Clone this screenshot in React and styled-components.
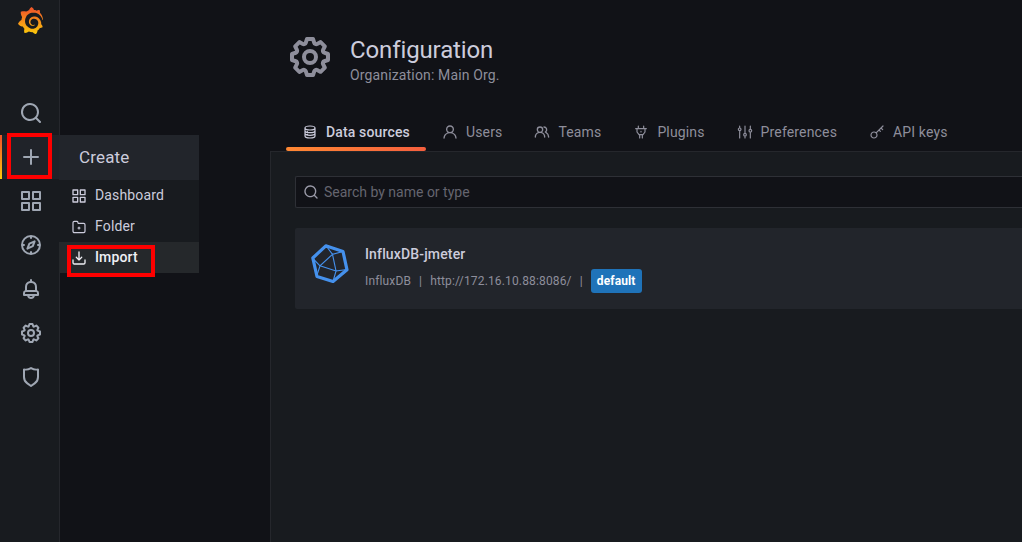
import styled, { createGlobalStyle, css } from "styled-components";
import { SiGrafana } from "react-icons/si";

const GlobalStyle = createGlobalStyle`
  * {
    box-sizing: border-box;
  }

  body {
    margin: 0;
    background: #111217;
    color: #ccccdc;
    font-family: Roboto, "Liberation Sans", sans-serif;
    font-size: 14px;
    letter-spacing: 0.01071em;
    overflow: hidden;
  }
`;

const Page = styled.div`
  display: flex;
  width: 100vw;
  height: 100vh;
  overflow: hidden;
`;

const SideMenu = styled.nav`
  flex: none;
  width: 60px;
  display: flex;
  flex-direction: column;
  background: #181b1f;
  border-right: 1px solid #25272c;
`;

const Logo = styled.div`
  height: 91px;
  padding: 7px 0 0 17px;

  svg {
    display: block;
  }

  svg > path {
    fill: url(#flame);
  }
`;

const SideItem = styled.div`
  position: relative;
  height: 44px;
  padding-left: 2px;
  display: flex;
  align-items: center;
  justify-content: center;
  color: #9fa7b3;

  ${({ $active }) =>
    $active &&
    css`
      background: #202329;

      &::before {
        content: "";
        position: absolute;
        left: 0;
        top: 0;
        width: 2px;
        height: 100%;
        background: linear-gradient(#f05a28 10%, #fbca0a);
      }
    `}
`;

const Flyout = styled.div`
  position: absolute;
  z-index: 1;
  top: 0;
  left: 59px;
  width: 140px;
  background: #181b1f;
  color: #ccccdc;
`;

const FlyoutTitle = styled.div`
  height: 45px;
  padding: 0 0 2px 20px;
  display: flex;
  align-items: center;
  background: #22252b;
  font-size: 17px;
`;

const FlyoutItem = styled.div`
  height: 31px;
  padding-left: 12px;
  display: flex;
  align-items: center;
  gap: 8px;
  line-height: 14px;
  background: ${({ $selected }) => ($selected ? "#25282b" : "transparent")};
  color: ${({ $selected }) => ($selected ? "#f0f0f5" : "#ccccdc")};
  font-weight: ${({ $selected }) => ($selected ? 500 : 400)};

  span {
    padding-bottom: 2px;
  }
`;

const Marker = styled.div`
  position: absolute;
  z-index: 2;
  top: ${({ $top }) => $top}px;
  left: ${({ $left }) => $left}px;
  width: ${({ $width }) => $width}px;
  height: ${({ $height }) => $height}px;
  border: 4px solid #fe0000;
`;

const Main = styled.main`
  flex: 1;
  min-width: 0;
  padding-left: 210px;
  display: flex;
  flex-direction: column;
`;

const Header = styled.header`
  height: 113px;
  padding: 33px 0 0 16px;
  display: flex;
  gap: 16px;
  color: #8e8e9b;
`;

const Title = styled.h1`
  margin: 3px 0 2px;
  color: #ccccdc;
  font-size: 24px;
  font-weight: 400;
  line-height: 28px;
  letter-spacing: -0.12px;
`;

const SubTitle = styled.div`
  line-height: 18px;
`;

const Tabs = styled.div`
  height: 38px;
  padding-left: 16px;
  display: flex;
`;

const Tab = styled.div`
  position: relative;
  padding: 0 16px;
  display: flex;
  align-items: center;
  gap: 8px;
  color: ${({ $active }) => ($active ? "#ccccdc" : "#8e8e9b")};
  font-weight: ${({ $active }) => ($active ? 500 : 400)};

  &::after {
    content: "";
    display: ${({ $active }) => ($active ? "block" : "none")};
    position: absolute;
    left: 0;
    right: 0;
    bottom: 0;
    height: 4px;
    border-radius: 2px;
    background: linear-gradient(90deg, #ff8833, #f55f3e);
  }
`;

const Content = styled.section`
  flex: 1;
  padding: 24px 0 0 24px;
  background: #181b1f;
  border: solid #25272c;
  border-width: 1px 0 0 1px;
`;

const SearchBox = styled.div`
  height: 32px;
  margin-bottom: 20px;
  padding-left: 7px;
  display: flex;
  align-items: center;
  gap: 5px;
  background: #111217;
  border: 1px solid #2e3036;
  border-right: 0;
  border-radius: 2px 0 0 2px;
  color: #9a9aa8;
`;

const Placeholder = styled.span`
  color: #65656f;
  letter-spacing: 0;
`;

const Card = styled.div`
  height: 81px;
  padding: 15px;
  display: flex;
  gap: 15px;
  background: #22252b;
  border-radius: 2px 0 0 2px;
`;

const CardTitle = styled.div`
  margin-bottom: 4px;
  line-height: 22px;
  font-weight: 500;
`;

const CardMeta = styled.div`
  height: 24px;
  display: flex;
  align-items: center;
  color: #8e8e9b;
  font-size: 12px;
  letter-spacing: 0.0125em;
`;

const Separator = styled.span`
  margin: 0 8px;
`;

const Badge = styled.span`
  height: 24px;
  padding: 0 6px;
  display: flex;
  align-items: center;
  border-radius: 3px;
  background: #1f73b9;
  color: #fff;
  font-weight: 700;
  letter-spacing: 0.01em;
`;

const paths = {
  search:
    "M21.71,20.29,18,16.61A9,9,0,1,0,16.61,18l3.68,3.68a1,1,0,0,0,1.42,0A1,1,0,0,0,21.71,20.29ZM11,18a7,7,0,1,1,7-7A7,7,0,0,1,11,18Z",
  plus: "M19,11H13V5a1,1,0,0,0-2,0v6H5a1,1,0,0,0,0,2h6v6a1,1,0,0,0,2,0V13h6a1,1,0,0,0,0-2Z",
  apps: "M10,13H3a1,1,0,0,0-1,1v7a1,1,0,0,0,1,1h7a1,1,0,0,0,1-1V14A1,1,0,0,0,10,13ZM9,20H4V15H9ZM21,2H14a1,1,0,0,0-1,1v7a1,1,0,0,0,1,1h7a1,1,0,0,0,1-1V3A1,1,0,0,0,21,2ZM20,9H15V4h5Zm1,4H14a1,1,0,0,0-1,1v7a1,1,0,0,0,1,1h7a1,1,0,0,0,1-1V14A1,1,0,0,0,21,13Zm-1,7H15V15h5ZM10,2H3A1,1,0,0,0,2,3v7a1,1,0,0,0,1,1h7a1,1,0,0,0,1-1V3A1,1,0,0,0,10,2ZM9,9H4V4H9Z",
  bell: "M18,13.18V10a6,6,0,0,0-5-5.91V3a1,1,0,0,0-2,0V4.09A6,6,0,0,0,6,10v3.18A3,3,0,0,0,4,16v2a1,1,0,0,0,1,1H8.14a4,4,0,0,0,7.72,0H19a1,1,0,0,0,1-1V16A3,3,0,0,0,18,13.18ZM8,10a4,4,0,0,1,8,0v3H8Zm4,10a2,2,0,0,1-1.72-1h3.44A2,2,0,0,1,12,20Zm6-3H6V16a1,1,0,0,1,1-1H17a1,1,0,0,1,1,1Z",
  cog: "M21.32,9.55l-1.89-.63.89-1.78A1,1,0,0,0,20.13,6L18,3.87a1,1,0,0,0-1.15-.19l-1.78.89-.63-1.89A1,1,0,0,0,13.5,2h-3a1,1,0,0,0-.95.68L8.92,4.57,7.14,3.68A1,1,0,0,0,6,3.87L3.87,6a1,1,0,0,0-.19,1.15l.89,1.78-1.89.63A1,1,0,0,0,2,10.5v3a1,1,0,0,0,.68.95l1.89.63-.89,1.78A1,1,0,0,0,3.87,18L6,20.13a1,1,0,0,0,1.15.19l1.78-.89.63,1.89a1,1,0,0,0,.95.68h3a1,1,0,0,0,.95-.68l.63-1.89,1.78.89A1,1,0,0,0,18,20.13L20.13,18a1,1,0,0,0,.19-1.15l-.89-1.78,1.89-.63A1,1,0,0,0,22,13.5v-3A1,1,0,0,0,21.32,9.55ZM20,12.78l-1.2.4A2,2,0,0,0,17.64,16l.57,1.14-1.1,1.1L16,17.64a2,2,0,0,0-2.79,1.16l-.4,1.2H11.22l-.4-1.2A2,2,0,0,0,8,17.64l-1.14.57-1.1-1.1L6.36,16A2,2,0,0,0,5.2,13.18L4,12.78V11.22l1.2-.4A2,2,0,0,0,6.36,8L5.79,6.89l1.1-1.1L8,6.36A2,2,0,0,0,10.82,5.2l.4-1.2h1.56l.4,1.2A2,2,0,0,0,16,6.36l1.14-.57,1.1,1.1L17.64,8a2,2,0,0,0,1.16,2.79l1.2.4ZM12,8a4,4,0,1,0,4,4A4,4,0,0,0,12,8Zm0,6a2,2,0,1,1,2-2A2,2,0,0,1,12,14Z",
  shield:
    "M19.63,3.65a1,1,0,0,0-.84-.2,8,8,0,0,1-6.22-1.27,1,1,0,0,0-1.14,0A8,8,0,0,1,5.21,3.45a1,1,0,0,0-.84.2A1,1,0,0,0,4,4.43v7.45a9,9,0,0,0,3.77,7.33l3.65,2.6a1,1,0,0,0,1.16,0l3.65-2.6A9,9,0,0,0,20,11.88V4.43A1,1,0,0,0,19.63,3.65ZM18,11.88a7,7,0,0,1-2.93,5.7L12,19.77,8.93,17.58A7,7,0,0,1,6,11.88V5.58a10,10,0,0,0,6-1.39,10,10,0,0,0,6,1.39Z",
  import:
    "M21,14a1,1,0,0,0-1,1v4a1,1,0,0,1-1,1H5a1,1,0,0,1-1-1V15a1,1,0,0,0-2,0v4a3,3,0,0,0,3,3H19a3,3,0,0,0,3-3V15A1,1,0,0,0,21,14Zm-9.71,1.71a1,1,0,0,0,.33.21.94.94,0,0,0,.76,0,1,1,0,0,0,.33-.21l4-4a1,1,0,0,0-1.42-1.42L13,12.59V3a1,1,0,0,0-2,0v9.59l-2.29-2.3a1,1,0,1,0-1.42,1.42Z",
  user: "M15.71,12.71a6,6,0,1,0-7.42,0,10,10,0,0,0-6.22,8.18,1,1,0,0,0,2,.22,8,8,0,0,1,15.9,0,1,1,0,0,0,1,.89h.11a1,1,0,0,0,.88-1.1A10,10,0,0,0,15.71,12.71ZM12,12a4,4,0,1,1,4-4A4,4,0,0,1,12,12Z",
  users:
    "M12.3,12.22A4.92,4.92,0,0,0,14,8.5a5,5,0,0,0-10,0,4.92,4.92,0,0,0,1.7,3.72A8,8,0,0,0,1,19.5a1,1,0,0,0,2,0,6,6,0,0,1,12,0,1,1,0,0,0,2,0A8,8,0,0,0,12.3,12.22ZM9,11.5a3,3,0,1,1,3-3A3,3,0,0,1,9,11.5Zm9.74.32A5,5,0,0,0,15,3.5a1,1,0,0,0,0,2,3,3,0,0,1,3,3,3,3,0,0,1-1.5,2.59,1,1,0,0,0-.5.84,1,1,0,0,0,.45.86l.39.26.13.07a7,7,0,0,1,4,6.38,1,1,0,0,0,2,0A9,9,0,0,0,18.74,11.82Z",
};

// icons drawn with a 2px stroke instead of a filled outline
const strokes = {
  compass:
    "M12 3a9 9 0 1 0 0 18a9 9 0 1 0 0-18M12 3v2M12 19v2M3 12h2M19 12h2M15.6 8.4L13.8 13.2L8.4 15.6L10.4 10.6Z",
  folder:
    "M3 5.500a2 2 0 0 1 2-2h4a1 1 0 0 1 1 .7L10.700 6.500H19a2 2 0 0 1 2 2v10a2 2 0 0 1-2 2H5a2 2 0 0 1-2-2ZM12 12v3M10.500 13.500h3",
  database:
    "M4.500 6c0-1.700 3.300-3 7.500-3s7.500 1.300 7.500 3s-3.300 3-7.500 3s-7.500-1.300-7.500-3V18c0 1.700 3.300 3 7.500 3s7.500-1.300 7.500-3V6M4.500 10c0 1.700 3.300 3 7.500 3s7.500-1.300 7.500-3M4.500 14c0 1.700 3.300 3 7.500 3s7.500-1.300 7.500-3M8 11.500v.1M8 15.500v.1",
  plug: "M4 7h16M8 3v4M16 3v4M6 7v5l3 4h6l3-4V7M10 16v5M14 16v5M12 11v1",
  sliders:
    "M4 3v3M4 10v11M12 3v11M12 18v3M20 3v5M20 12v9M4 6a2 2 0 1 0 0 4a2 2 0 1 0 0-4M12 14a2 2 0 1 0 0 4a2 2 0 1 0 0-4M20 8a2 2 0 1 0 0 4a2 2 0 1 0 0-4",
  key: "M7.500 12a4.500 4.500 0 1 0 0 9a4.500 4.500 0 1 0 0-9M10.700 13.300L21 3M18 6l2.500 2.500M15 9l2 2",
};

const Icon = ({ name, size = 16 }) => (
  <svg width={size} height={size} viewBox="0 0 24 24">
    {paths[name] ? (
      <path d={paths[name]} fill="currentColor" />
    ) : (
      <path
        d={strokes[name]}
        fill="none"
        stroke="currentColor"
        strokeWidth={size > 16 ? 2 : 1.8}
        strokeLinecap="round"
        strokeLinejoin="round"
      />
    )}
  </svg>
);

const InfluxLogo = () => (
  <svg width="40" height="40" viewBox="0 0 40 40" fill="none" stroke="#4591ed">
    <path
      d="M15.800 2.800L33 8.500L37 26.800L23 38.500L7 33.500L2.800 15Z"
      strokeWidth="3.200"
      strokeLinejoin="round"
    />
    <path
      d="M22.500 11.300L10 22.800L26 28ZM15.800 2.500L22.500 11.300L33 8.500M2.400 15L10 22.800L6.500 33.500M37 26.500L26 28L23 38.500"
      strokeWidth="1.100"
    />
  </svg>
);

const createLinks = [
  { label: "Dashboard", icon: "apps" },
  { label: "Folder", icon: "folder" },
  { label: "Import", icon: "import", selected: true },
];

const tabs = [
  { label: "Data sources", icon: "database", active: true },
  { label: "Users", icon: "user" },
  { label: "Teams", icon: "users" },
  { label: "Plugins", icon: "plug" },
  { label: "Preferences", icon: "sliders" },
  { label: "API keys", icon: "key" },
];

const App = () => {
  return (
    <Page>
      <GlobalStyle />
      <SideMenu>
        <Logo>
          <svg width="0" height="0">
            <linearGradient id="flame" x1="0" y1="0" x2="0" y2="1">
              <stop offset="0.1" stopColor="#f05a28" />
              <stop offset="1" stopColor="#fbca0a" />
            </linearGradient>
          </svg>
          <SiGrafana size={27} />
        </Logo>
        <SideItem>
          <Icon name="search" size={24} />
        </SideItem>
        <SideItem $active>
          <Icon name="plus" size={24} />
          <Flyout>
            <FlyoutTitle>Create</FlyoutTitle>
            {createLinks.map(({ label, icon, selected }) => (
              <FlyoutItem key={label} $selected={selected}>
                <Icon name={icon} />
                <span>{label}</span>
              </FlyoutItem>
            ))}
          </Flyout>
          <Marker $top={-2} $left={7} $width={45} $height={46} />
          <Marker $top={110} $left={67} $width={88} $height={32} />
        </SideItem>
        {["apps", "compass", "bell", "cog", "shield"].map((name) => (
          <SideItem key={name}>
            <Icon name={name} size={24} />
          </SideItem>
        ))}
      </SideMenu>
      <Main>
        <Header>
          <Icon name="cog" size={48} />
          <div>
            <Title>Configuration</Title>
            <SubTitle>Organization: Main Org.</SubTitle>
          </div>
        </Header>
        <Tabs>
          {tabs.map(({ label, icon, active }) => (
            <Tab key={label} $active={active}>
              <Icon name={icon} />
              {label}
            </Tab>
          ))}
        </Tabs>
        <Content>
          <SearchBox>
            <Icon name="search" />
            <Placeholder>Search by name or type</Placeholder>
          </SearchBox>
          <Card>
            <InfluxLogo />
            <div>
              <CardTitle>InfluxDB-jmeter</CardTitle>
              <CardMeta>
                InfluxDB
                <Separator>|</Separator>
                http://172.16.10.88:8086/
                <Separator>|</Separator>
                <Badge>default</Badge>
              </CardMeta>
            </div>
          </Card>
        </Content>
      </Main>
    </Page>
  );
};

export default App;
